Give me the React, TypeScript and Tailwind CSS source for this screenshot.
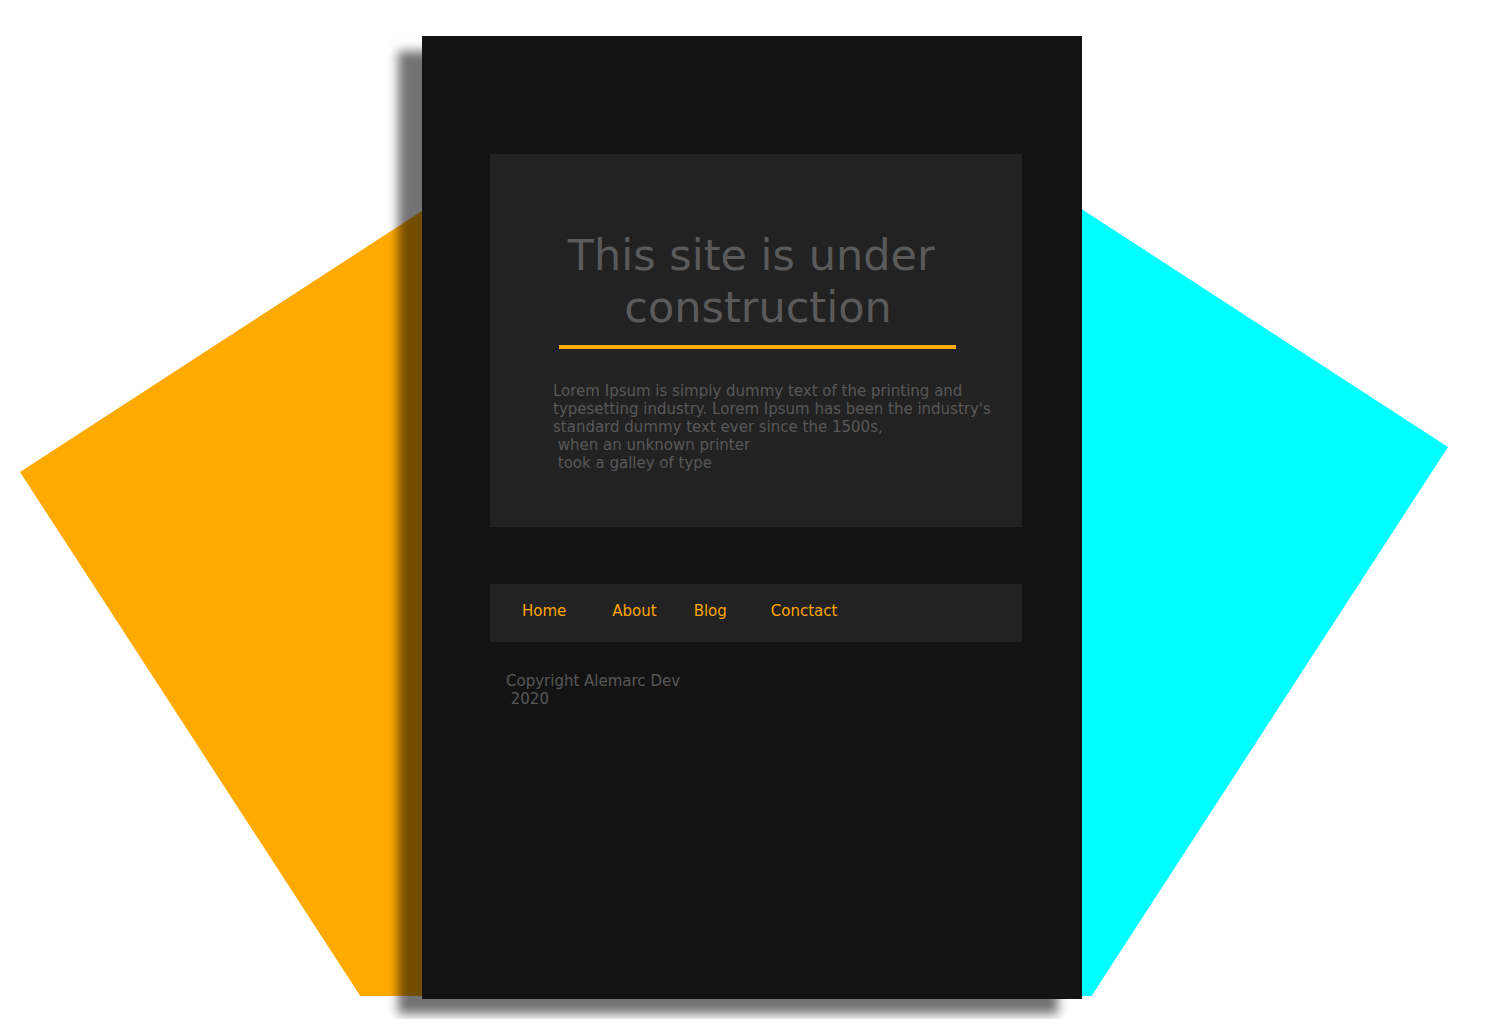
import React from "react";

export default function App() {
  return (
    <div className="relative w-[1490px] h-[1019px] bg-white overflow-hidden font-['DejaVu_Sans',sans-serif]">
      <div className="absolute left-0 top-0 w-full h-[996px] overflow-hidden">
        <div className="absolute left-[20px] top-[472px] w-[720px] h-[720px] bg-[#ffaa00] origin-top-left -rotate-[33deg]" />
        <div className="absolute left-[728px] top-[447px] w-[720px] h-[720px] bg-[#00ffff] origin-top-right rotate-[33deg]" />
      </div>
      <div className="relative pl-[422px] pt-[36px]">
        <div className="w-[660px] h-[963px] bg-[#131313] shadow-[-24px_15px_10px_rgba(0,0,0,0.55)] pl-[68px] pr-[60px] pt-[118px]">
          <section className="h-[373px] bg-[#222222] pt-[75px] flex flex-col items-center">
            <h1 className="pl-[4px] text-[43px] leading-[52px] text-[#5a5a5a] text-center whitespace-pre">
              {"This site is under \nconstruction"}
            </h1>
            <div className="mt-[12px] ml-[3px] w-[397px] h-[4px] bg-[#ffaa00]" />
            <div className="self-start ml-[63px] mt-[33px] text-[15px] leading-[18px] text-[#585858] whitespace-pre">
              {"Lorem Ipsum is simply dummy text of the printing and\ntypesetting industry. Lorem Ipsum has been the industry's\nstandard dummy text ever since the 1500s,\n when an unknown printer\n took a galley of type"}
            </div>
          </section>
          <nav className="mt-[57px] h-[58px] bg-[#222222] flex items-center pb-[4px] pl-[32px] text-[15px] text-[#ffa500]">
            <a className="mr-[46px]">Home</a>
            <a className="mr-[37px]">About</a>
            <a className="mr-[44px]">Blog</a>
            <a>Conctact</a>
          </nav>
          <div className="mt-[30px] ml-[16px] text-[15px] leading-[18px] text-[#585858] whitespace-pre">
            {"Copyright Alemarc Dev\n 2020"}
          </div>
        </div>
      </div>
    </div>
  );
}
